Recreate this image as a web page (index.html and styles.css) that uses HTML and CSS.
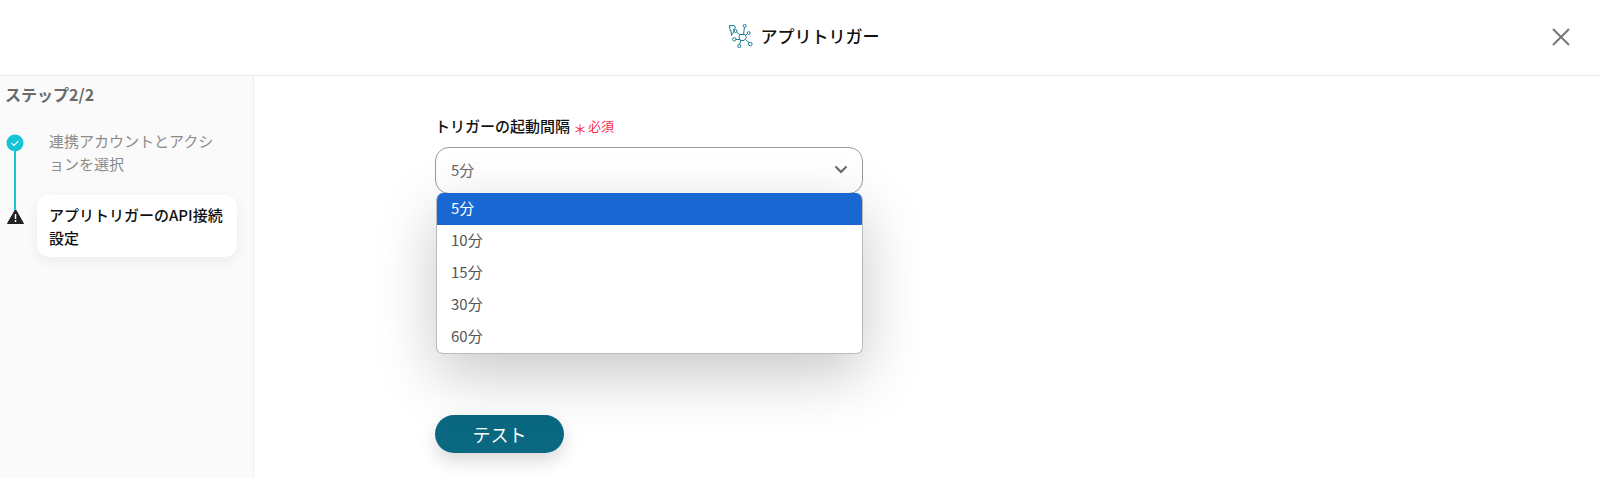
FILE: index.html
```html
<!DOCTYPE html>
<html lang="ja">
<head>
    <meta charset="UTF-8">
    <title>アプリトリガー</title>
    <link rel="stylesheet" href="styles.css">
</head>
<body>
    <header class="header">
        <div class="title">
            <svg class="title-icon" width="24" height="24" viewBox="0 0 24 24" fill="none" stroke="#1f7f99" stroke-width="1">
                <path d="M0.500 1.500h5l1 2.500-2.500 2 1.500 0.500-3 5-0.500-5H1z"/>
                <path d="M7.500 8l3.500 3M15.500 3l-1 7.500M18.500 9.500l-2 2M16.500 15.500l3.500 3.200M11 15.500l-4.500 0M12 16l-1.500 4.500"/>
                <path d="M11 10.500h5l1.500 3-2.500 3h-3.500l-1.500-3z"/>
                <circle cx="6.500" cy="7" r="1.500"/>
                <circle cx="15.700" cy="1.800" r="1.500"/>
                <circle cx="19.700" cy="9" r="1.400"/>
                <circle cx="21.300" cy="20" r="1.800"/>
                <circle cx="10.300" cy="22" r="1.600"/>
                <circle cx="5.300" cy="15.300" r="1.700"/>
            </svg>
            <span>アプリトリガー</span>
        </div>
        <svg class="close" width="18" height="18" viewBox="0 0 18 18" stroke="#777" stroke-width="2">
            <path d="M1 1l16 16M17 1L1 17"/>
        </svg>
    </header>

    <div class="body-row">
        <aside class="sidebar">
            <div class="step-count">ステップ2/2</div>
            <div class="step step-done">
                <div class="step-mark">
                    <svg width="18" height="18" viewBox="0 0 18 18">
                        <circle cx="9" cy="9" r="8.500" fill="#16c5d5"/>
                        <path d="M5.500 9.200l2.500 2.300 4.500-4.700" fill="none" stroke="#fff" stroke-width="1.100"/>
                    </svg>
                </div>
                <div class="step-label">連携アカウントとアクションを選択</div>
            </div>
            <div class="step step-current">
                <div class="step-mark">
                    <svg width="17" height="15" viewBox="0 0 17 15">
                        <path d="M8.500 0.500L16.500 14.500H0.500z" fill="#222" stroke="#222" stroke-linejoin="round"/>
                        <path d="M8.500 5v5M8.500 11v2" stroke="#fff" stroke-width="1.500"/>
                    </svg>
                </div>
                <div class="step-label">アプリトリガーのAPI接続設定</div>
            </div>
        </aside>

        <main class="content">
            <div class="field">
                <div class="field-label">
                    <span>トリガーの起動間隔</span>
                    <span class="required-mark">＊</span>
                    <span class="required">必須</span>
                </div>
                <div class="select">
                    <span>5分</span>
                    <svg width="14" height="9" viewBox="0 0 14 9" fill="none" stroke="#666" stroke-width="2">
                        <path d="M1.500 1.500L7 7l5.500-5.500"/>
                    </svg>
                </div>
                <ul class="options">
                    <li class="option selected">5分</li>
                    <li class="option">10分</li>
                    <li class="option">15分</li>
                    <li class="option">30分</li>
                    <li class="option">60分</li>
                </ul>
            </div>
            <button class="test-btn" type="button">テスト</button>
        </main>
    </div>
</body>
</html>
```

FILE: styles.css
```css
* {
    box-sizing: border-box;
}

body {
    margin: 0;
    height: 478px;
    overflow: hidden;
    background: white;
    font-family: "Noto Sans CJK JP", "Noto Sans", sans-serif;
    color: #111;
}

.header {
    height: 76px;
    display: flex;
    align-items: center;
    justify-content: center;
    border-bottom: 1px solid #e8e8e8;
    position: relative;
}

.title {
    display: flex;
    align-items: center;
    gap: 8px;
    font-size: 17px;
    font-weight: 500;
    margin-bottom: 4px;
    padding-left: 8px;
}

.close {
    position: absolute;
    right: 30px;
    top: 28px;
}

.body-row {
    display: flex;
    height: 402px;
}

.sidebar {
    width: 254px;
    background: #fafafa;
    border-right: 1px solid #eee;
    padding: 8px 16px 0 6px;
}

.step-count {
    font-size: 16px;
    font-weight: 700;
    color: #6b6b6b;
    line-height: 22px;
    margin: -1px 0 27px -1px;
}

.step {
    display: flex;
    align-items: flex-start;
    font-size: 15px;
    line-height: 23px;
}

.step-mark {
    width: 18px;
    flex-shrink: 0;
    display: flex;
    justify-content: center;
}

.step-done {
    height: 63px;
    position: relative;
    color: #8a8a8a;
    font-weight: 400;
}

.step-done .step-mark {
    margin-top: 2px;
}

.step-done::after {
    content: "";
    position: absolute;
    left: 8px;
    top: 18px;
    width: 2px;
    height: 60px;
    background: #16c5d5;
}

.step-done .step-label {
    margin-top: -3px;
    margin-left: 25px;
    width: 175px;
}

.step-current {
    color: #111;
    font-weight: 500;
}

.step-current .step-mark {
    margin-top: 14px;
}

.step-current .step-label {
    margin-left: 13px;
    padding: 8px 10px 0 12px;
    width: 200px;
    height: 62px;
    background: white;
    border-radius: 12px;
    box-shadow: 0 4px 14px rgba(0, 0, 0, 0.06);
}

.content {
    flex: 1;
    padding: 38px 0 0 181px;
}

.field {
    width: 428px;
    position: relative;
}

.field-label {
    display: flex;
    align-items: center;
    height: 22px;
    margin-bottom: 11px;
    font-size: 15px;
    font-weight: 500;
}

.required-mark {
    color: #ff2d55;
    font-size: 14px;
    font-weight: 400;
    line-height: 22px;
    margin: 6px 1px 0 3px;
}

.required {
    color: #ff2d55;
    font-size: 13px;
    font-weight: 400;
    margin-top: 1px;
}

.select {
    height: 47px;
    padding: 0 14px 2px 15px;
    display: flex;
    align-items: center;
    justify-content: space-between;
    border: 1px solid #999;
    border-radius: 14px;
    font-size: 15px;
    color: #666;
}

.options {
    position: absolute;
    left: 1px;
    right: 0;
    top: 79px;
    margin: 0;
    padding: 0;
    list-style: none;
    background: white;
    border: 1px solid #bbb;
    border-top: none;
    border-radius: 7px;
    overflow: hidden;
    box-shadow: 0 20px 60px rgba(0, 0, 0, 0.22);
}

.option {
    height: 32px;
    line-height: 30px;
    padding-left: 14px;
    font-size: 15px;
    color: #555;
}

.option.selected {
    background: #1967d2;
    color: white;
}

.test-btn {
    display: block;
    margin-top: 221px;
    width: 129px;
    height: 38px;
    border: none;
    border-radius: 19px;
    background: #0a6880;
    color: white;
    font-family: inherit;
    font-size: 18px;
    box-shadow: 0 8px 18px rgba(0, 0, 0, 0.15);
}
```
